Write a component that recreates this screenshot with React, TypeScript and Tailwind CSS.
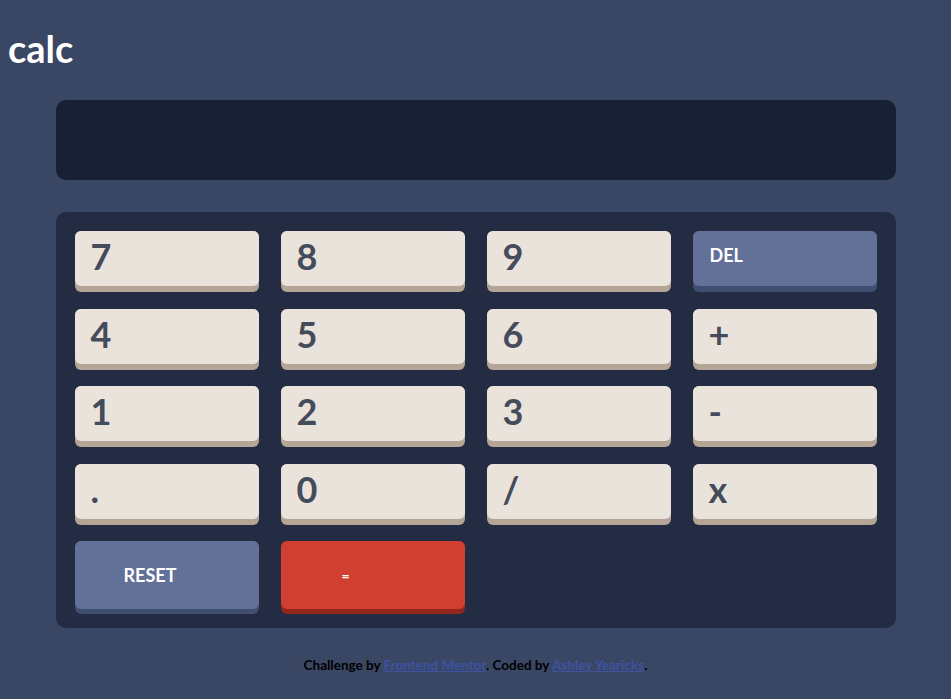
import React from 'react';

type Key = { label: string; kind?: 'num' | 'del' | 'eq' };

const keys: Key[] = [
  { label: '7' }, { label: '8' }, { label: '9' }, { label: 'DEL', kind: 'del' },
  { label: '4' }, { label: '5' }, { label: '6' }, { label: '+' },
  { label: '1' }, { label: '2' }, { label: '3' }, { label: '-' },
  { label: '.' }, { label: '0' }, { label: '/' }, { label: 'x' },
];

function NumKey({ label }: { label: string }) {
  return (
    <div className="h-[61px] rounded-[6px] bg-[#b4a597]">
      <div className="flex h-[55px] items-center rounded-[6px] bg-[#eae3dc] pb-[5px] pl-4 text-[36px] font-bold text-[#444b5a]">
        {label}
      </div>
    </div>
  );
}

function DelKey() {
  return (
    <div className="h-[61px] rounded-[6px] bg-[#404e72]">
      <div className="flex h-[55px] items-center rounded-[6px] bg-[#637097] pb-[6px] pl-[17px] text-[18px] font-bold text-white">
        DEL
      </div>
    </div>
  );
}

export default function App() {
  return (
    <div
      className="min-h-[699px] w-full bg-[#3a4764]"
      style={{ fontFamily: 'Lato, "Liberation Sans", sans-serif' }}
    >
      <h1 className="pl-[8px] pt-[29px] text-[38px] font-bold leading-[38px] text-white">calc</h1>

      <div className="mx-auto mt-[33px] w-[840px]">
        {/* Screen */}
        <div className="h-[80px] rounded-[10px] bg-[#182034]"></div>

        {/* Keypad */}
        <div className="mt-[32px] rounded-[10px] bg-[#232c43] px-[19px] pb-[14px] pt-[19px]">
          <div className="grid grid-cols-4 gap-x-[22px] gap-y-[16.5px]">
            {keys.map((k) =>
              k.kind === 'del' ? <DelKey key={k.label} /> : <NumKey key={k.label} label={k.label} />
            )}
            <div className="col-span-1 h-[73px] rounded-[6px] bg-[#404e72]">
              <div className="flex h-[68px] items-center rounded-[6px] bg-[#637097] pl-[49px] text-[18px] font-bold text-white">
                RESET
              </div>
            </div>
            <div className="col-span-1 h-[73px] rounded-[6px] bg-[#93261a]">
              <div className="flex h-[68px] items-center rounded-[6px] bg-[#d03f2f] pl-[61px] text-[14px] font-bold text-white">
                =
              </div>
            </div>
          </div>
        </div>
      </div>

      <p className="mt-[27px] text-center text-[13.5px] font-bold text-black">
        Challenge by{' '}
        <a href="#" className="text-[#3e52a3] underline">
          Frontend Mentor
        </a>
        . Coded by{' '}
        <a href="#" className="text-[#3e52a3] underline">
          Ashley Yearicks
        </a>
        .
      </p>
    </div>
  );
}
